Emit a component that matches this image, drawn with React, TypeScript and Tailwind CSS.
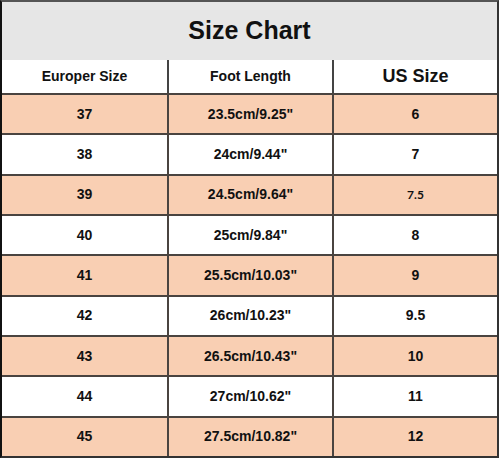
const rows: [string, string, string][] = [
  ["37", "23.5cm/9.25\"", "6"],
  ["38", "24cm/9.44\"", "7"],
  ["39", "24.5cm/9.64\"", "7.5"],
  ["40", "25cm/9.84\"", "8"],
  ["41", "25.5cm/10.03\"", "9"],
  ["42", "26cm/10.23\"", "9.5"],
  ["43", "26.5cm/10.43\"", "10"],
  ["44", "27cm/10.62\"", "11"],
  ["45", "27.5cm/10.82\"", "12"],
];

export default function App() {
  return (
    <div className="w-[500px] h-[459px] bg-white" style={{ fontFamily: '"Liberation Sans", Arial, sans-serif' }}>
      <div className="w-[499px] border-2 border-l-[#111] border-t-[#555] border-r-[#333] border-b-[#333]">
        {/* Title */}
        <div className="h-[58px] bg-[#e6e6e6] flex items-center justify-center">
          <h1 className="text-[25px] font-bold text-[#111]">Size Chart</h1>
        </div>

        {/* Header */}
        <div className="grid grid-cols-3 h-[33px] bg-white text-[#111] font-bold">
          <div className="flex items-center justify-center text-[14px]">Europer Size</div>
          <div className="flex items-center justify-center text-[14px] border-l-2 border-[#444]">Foot Length</div>
          <div className="flex items-center justify-center text-[18px] border-l-2 border-[#444]">US Size</div>
        </div>

        {rows.map(([eu, foot, us], i) => (
          <div
            key={eu}
            className={`grid grid-cols-3 h-[40.33px] border-t-2 border-[#4a4440] font-bold text-[14px] text-[#111] ${
              i % 2 === 0 ? "bg-[#f9cfb3]" : "bg-white"
            }`}
          >
            <div className="flex items-center justify-center">{eu}</div>
            <div className="flex items-center justify-center border-l-2 border-[#4a4440]">{foot}</div>
            <div className="flex items-center justify-center border-l-2 border-[#4a4440]">
              {us === "7.5" ? (
                <span className="text-[12px]" style={{ fontFamily: "Lato, sans-serif" }}>
                  {us}
                </span>
              ) : (
                us
              )}
            </div>
          </div>
        ))}
      </div>
    </div>
  );
}
